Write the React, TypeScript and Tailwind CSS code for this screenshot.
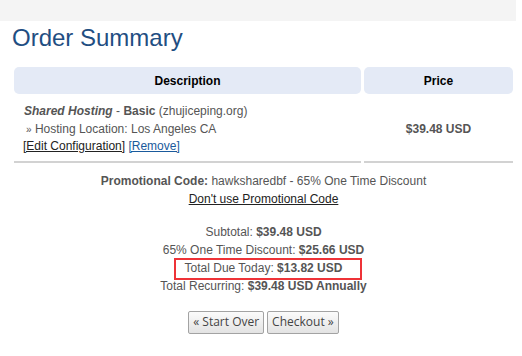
import React from 'react'

const totals = [
  { label: 'Subtotal:', value: '$39.48 USD' },
  { label: '65% One Time Discount:', value: '$25.66 USD' },
]

function Button({ children }: { children: React.ReactNode }) {
  return (
    <button className="h-[23px] px-[4px] border border-[#a3a3a3] rounded-[2px] bg-gradient-to-b from-[#fbfbfb] to-[#e3e3e3] text-[12px] text-[#444] font-['Open_Sans',sans-serif] leading-none">
      {children}
    </button>
  )
}

export default function App() {
  return (
    <div className="w-[522px] h-[356px] bg-white font-['Liberation_Sans',Arial,sans-serif] text-[12px] text-[#555]">
      <div className="w-[516px] h-[21px] bg-[#f4f4f4]" />
      <div className="w-[516px]">
        <h1 className="pl-[12px] pt-[2px] text-[24px] leading-[30px] text-[#1f4e82] h-[43px]">
          Order Summary
        </h1>

        {/* Cart table */}
        <table className="ml-[11px] w-[505px] border-separate border-spacing-[3px]">
          <thead>
            <tr>
              <th className="w-[347px] h-[27px] bg-[#e4eaf6] rounded-[5px] text-black font-bold text-[12px]">
                Description
              </th>
              <th className="h-[27px] bg-[#e4eaf6] rounded-[5px] text-black font-bold text-[12px]">
                Price
              </th>
            </tr>
          </thead>
          <tbody>
            <tr>
              <td className="pl-[10px] pt-[6px] pb-[5px] border-b-2 border-[#d2d2d2] leading-[17.5px] align-top">
                <div>
                  <b>
                    <i>Shared Hosting</i>
                  </b>{' '}
                  - <b>Basic</b> (zhujiceping.org)
                </div>
                <div className="pl-[2px]">
                  <span className="text-[10px]">»</span> Hosting Location: Los Angeles CA
                </div>
                <div className="-ml-[1px]">
                  <a className="underline text-[#222]">[Edit Configuration]</a>{' '}
                  <a className="underline text-[#1a5a9c]">[Remove]</a>
                </div>
              </td>
              <td className="text-center font-bold border-b-2 border-[#d2d2d2] pt-[6px] pb-[5px]">
                $39.48 USD
              </td>
            </tr>
          </tbody>
        </table>

        {/* Promo */}
        <div className="pl-[11px] text-center leading-[18px] mt-[6px]">
          <div>
            <b>Promotional Code:</b> hawksharedbf - 65% One Time Discount
          </div>
          <div>
            <a className="underline text-[#222]">Don't use Promotional Code</a>
          </div>
        </div>

        {/* Totals */}
        <div className="pl-[11px] text-center leading-[18px] mt-[15px]">
          {totals.map((t) => (
            <div key={t.label}>
              {t.label} <b>{t.value}</b>
            </div>
          ))}
          <div>
            <span className="relative inline-block">
              Total Due Today: <b>$13.82 USD</b>
              <span className="absolute -left-[11px] -right-[20px] -top-[1px] -bottom-[3px] border-2 border-[#ee3338]" />
            </span>
          </div>
          <div>
            Total Recurring: <b>$39.48 USD Annually</b>
          </div>
        </div>

        <div className="flex justify-center gap-[3px] mt-[16px] pl-[11px]">
          <Button>« Start Over</Button>
          <Button>Checkout »</Button>
        </div>
      </div>
    </div>
  )
}
